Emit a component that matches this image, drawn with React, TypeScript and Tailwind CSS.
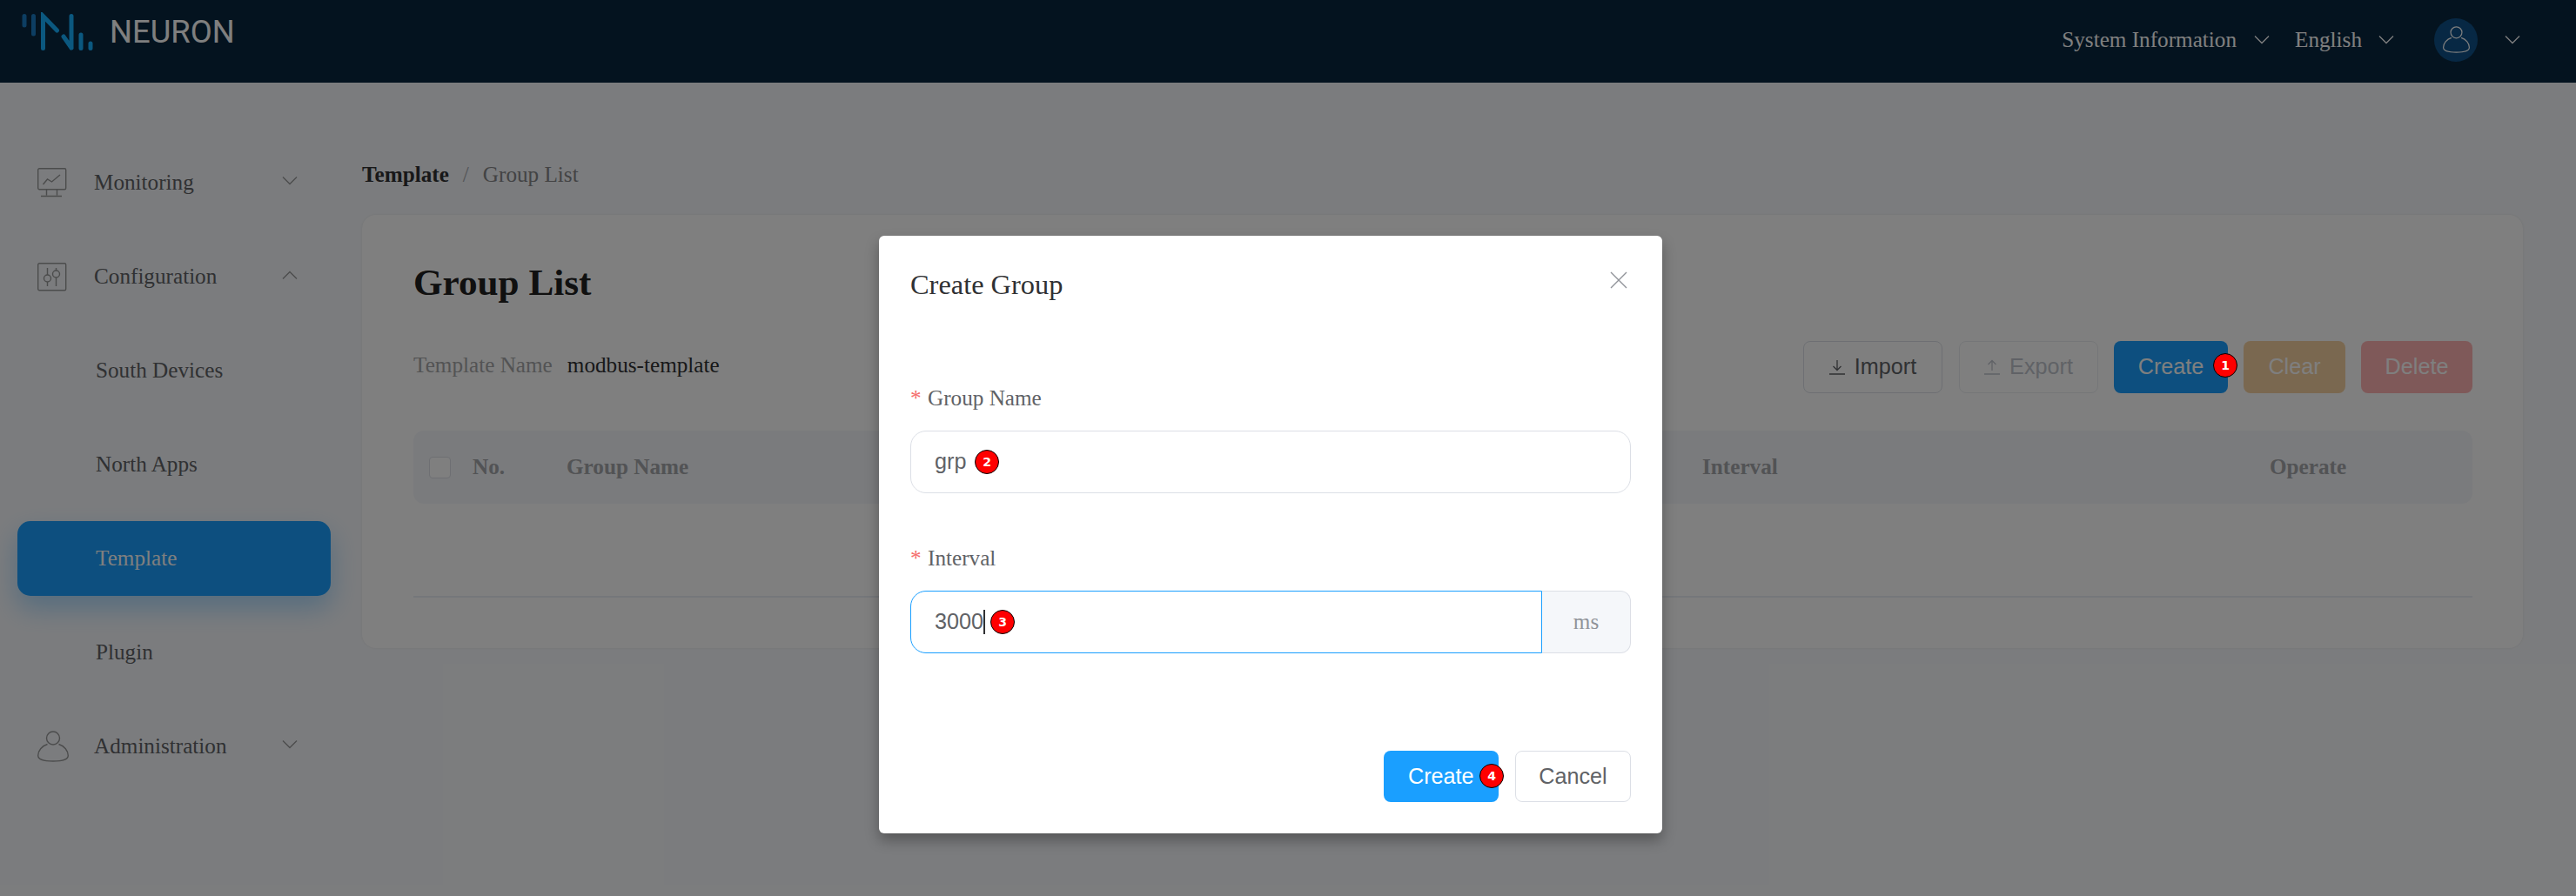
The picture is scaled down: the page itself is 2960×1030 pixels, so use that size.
const serif = "font-['Liberation_Serif',serif]";
const sans = "font-['Liberation_Sans',sans-serif]";

function Chevron({ up = false, className = '' }: { up?: boolean; className?: string }) {
  return (
    <svg width="18" height="10" viewBox="0 0 18 10" fill="none" stroke="currentColor" strokeWidth="1.3" className={className}>
      <path d={up ? 'M1 9.5 L9 1.5 L17 9.5' : 'M1 .5 L9 8.5 L17 .5'} />
    </svg>
  );
}

function UserIcon({ w = 36, h = 36 }: { w?: number; h?: number }) {
  return (
    <svg width={w} height={h} viewBox="0 0 36 36" fill="none" stroke="currentColor" strokeWidth="1.4">
      <circle cx="18" cy="8.5" r="7.5" />
      <path d="M11.5 15.5 C5 17.5 .7 23 .7 28.5 C.7 33 7 35 18 35 C29 35 35.3 33 35.3 28.5 C35.3 23 31 17.5 24.5 15.5" />
    </svg>
  );
}

function MonitorIcon() {
  return (
    <svg width="34" height="34" viewBox="0 0 34 34" fill="none" stroke="currentColor" strokeWidth="1.4">
      <rect x=".7" y=".7" width="32" height="24" rx="1.5" />
      <path d="M6.5 19 L11.5 13 L16.5 16 L26 8" />
      <path d="M10.5 25 V31.5 M22.5 25 V31.5 M4 32.5 H28" />
    </svg>
  );
}

function SlidersIcon() {
  return (
    <svg width="34" height="33" viewBox="0 0 34 33" fill="none" stroke="currentColor" strokeWidth="1.4">
      <rect x=".7" y=".7" width="32" height="31" rx="1.5" />
      <path d="M11.5 6 V14 M11.5 22 V27 M21.5 6 V9 M21.5 17 V27" />
      <circle cx="11.5" cy="18" r="4" />
      <circle cx="21.5" cy="13" r="4" />
    </svg>
  );
}

function Logo() {
  return (
    <svg width="82" height="46" viewBox="0 0 82 46" fill="none" strokeLinecap="round" strokeWidth="5" className="mt-[14px]">
      <path d="M3 4.5 V15 M13.5 4.5 V25" stroke="#1a7cc4" />
      <path d="M24.5 41.5 V4.5 L40.5 21 M48 28 L57 41 M57 41 L57 4.5 M68 26 V41.5 M79 36 V41.5" stroke="#17b0ff" />
    </svg>
  );
}

function Badge({ n, className }: { n: number; className: string }) {
  return (
    <span className={`absolute z-20 flex h-[28px] w-[28px] items-center justify-center rounded-full border border-black bg-[#ff0000] font-['DejaVu_Sans',sans-serif] text-[14px] font-bold leading-none text-white ${className}`}>
      {n}
    </span>
  );
}

function MenuItem({ label, icon, chevron, active, up }: { label: string; icon?: React.ReactNode; chevron?: boolean; active?: boolean; up?: boolean }) {
  return (
    <div
      className={`mb-[22px] flex h-[86px] items-center rounded-[15px] text-[25.2px] ${
        active ? 'bg-[#1a9fff] text-white shadow-[0_14px_30px_rgba(26,159,255,0.35)]' : 'text-[#606266]'
      }`}
    >
      <div className="flex w-[89px] shrink-0 items-center pl-[23px] text-[#979899]">{icon}</div>
      <span className={icon ? '-ml-[1px]' : 'pl-[1px]'}>{label}</span>
      {chevron && <Chevron up={up} className="ml-auto mr-[38px] -translate-y-[2px] text-[#979899]" />}
    </div>
  );
}

function ToolButton({ label, className, children, badge }: { label: string; className: string; children?: React.ReactNode; badge?: React.ReactNode }) {
  return (
    <div className={`relative flex h-[60px] items-center justify-center gap-[11px] rounded-[8px] ${sans} text-[25.2px] ${className}`}>
      {children}
      <span>{label}</span>
      {badge}
    </div>
  );
}

export default function App() {
  return (
    <div className={`relative flex h-[1030px] w-full flex-col overflow-hidden bg-[#f7f9fc] ${serif}`}>
      <header className="flex h-[95px] shrink-0 items-start justify-between bg-[#09273f] pl-[25px] pr-[64px]">
        <div className="flex items-start gap-[19px]">
          <Logo />
          <span className="mt-[15px] font-['Roboto',sans-serif] text-[36.4px] leading-[44px] text-white">NEURON</span>
        </div>
        <div className="flex h-[91px] items-center text-[25.2px] text-white">
          <span>System Information</span>
          <Chevron className="ml-[20px]" />
          <span className="ml-[29px]">English</span>
          <Chevron className="ml-[19px]" />
          <div className="ml-[46px] flex h-[50px] w-[50px] items-center justify-center rounded-full bg-[#0e5188]">
            <UserIcon w={31} h={31} />
          </div>
          <Chevron className="ml-[31px]" />
        </div>
      </header>

      <div className="flex min-h-0 flex-1">
        <aside className="w-[400px] shrink-0 px-[20px] pt-[72px]">
          <MenuItem label="Monitoring" icon={<MonitorIcon />} chevron />
          <MenuItem label="Configuration" icon={<SlidersIcon />} chevron up />
          <MenuItem label="South Devices" />
          <MenuItem label="North Apps" />
          <MenuItem label="Template" active />
          <MenuItem label="Plugin" />
          <MenuItem label="Administration" icon={<UserIcon />} chevron />
        </aside>

        <main className="ml-[16px] w-[2483px] pt-[88px]">
          <div className="flex h-[36px] items-center text-[25.2px]">
            <span className="font-bold text-[#303133]">Template</span>
            <span className="mx-[16px] text-[#a8abb2]">/</span>
            <span className="text-[#868789]">Group List</span>
          </div>

          <section className="mt-[28px] h-[498px] rounded-[16px] bg-white pl-[59px] pr-[58px] pt-[53px] shadow-[0_0_3px_rgba(0,0,0,0.08)]">
            <h1 className="text-[43.2px] font-bold leading-[50px] text-[#202020]">Group List</h1>
            <div className="mt-[42px] flex items-center justify-between">
              <div className="flex items-center pb-[4px] text-[25.2px]">
                <span className="text-[#a6a7a9]">Template Name</span>
                <span className="ml-[17px] text-[#303133]">modbus-template</span>
              </div>
              <div className="flex items-center gap-[18px]">
                <ToolButton label="Import" className="mr-[1px] w-[160px] border border-[#dcdfe6] text-[#606266]">
                  <svg width="18" height="18" viewBox="0 0 18 18" fill="none" stroke="currentColor" strokeWidth="1.3">
                    <path d="M9 1 V12 M4.5 8 L9 12.5 L13.5 8 M0 17 H18" />
                  </svg>
                </ToolButton>
                <ToolButton label="Export" className="w-[160px] border border-[#ebedf0] text-[#c0c4cc]">
                  <svg width="18" height="18" viewBox="0 0 18 18" fill="none" stroke="currentColor" strokeWidth="1.3">
                    <path d="M9 13 V1.5 M4.5 6 L9 1.5 L13.5 6 M0 17 H18" />
                  </svg>
                </ToolButton>
                <ToolButton label="Create" className="w-[131px] bg-[#1a9fff] text-white" badge={<Badge n={1} className="right-[-11px] top-[14px]" />} />
                <ToolButton label="Clear" className="w-[117px] bg-[#f5d0a0] text-white" />
                <ToolButton label="Delete" className="w-[128px] bg-[#ffb3b3] text-white" />
              </div>
            </div>

            <div className="mt-[43px] flex h-[84px] items-center rounded-[12px] bg-[#f5f7fa] text-[25.2px] font-bold text-[#a4a6aa]">
              <span className="ml-[18px] h-[25px] w-[25px] rounded-[4px] border border-[#dcdfe6] bg-white" />
              <span className="ml-[25px] w-[108px]">No.</span>
              <span className="w-[1305px]">Group Name</span>
              <span className="w-[652px]">Interval</span>
              <span>Operate</span>
            </div>
            <div className="h-[108px] border-b-2 border-[#ebeef5]" />
          </section>
        </main>
      </div>

      <div className="absolute inset-0 z-10 bg-black/50" />

      <div className="absolute left-[1010px] top-[271px] z-20 h-[687px] w-[900px] rounded-[6px] bg-white px-[36px] shadow-[0_8px_16px_rgba(0,0,0,0.3)]">
        <div className="flex h-[114px] items-start justify-between pr-[4px] pt-[36px]">
          <span className="text-[32.4px] leading-[40px] text-[#303133]">Create Group</span>
          <svg width="20" height="20" viewBox="0 0 20 20" fill="none" stroke="#909399" strokeWidth="1.4" className="mt-[5px]">
            <path d="M1 1 L19 19 M19 1 L1 19" />
          </svg>
        </div>

        <div className="mt-[54px] flex h-[38px] items-center text-[25.2px] text-[#606266]">
          <span className="w-[20px] text-[#f56c6c]">*</span>
          Group Name
        </div>
        <div className={`relative mt-[18px] flex h-[72px] items-center rounded-[18px] border border-[#dcdfe6] px-[27px] ${sans} text-[25.2px] text-[#606266]`}>
          grp
          <Badge n={2} className="left-[73px] top-[21px]" />
        </div>

        <div className="mt-[56px] flex h-[38px] items-center text-[25.2px] text-[#606266]">
          <span className="w-[20px] text-[#f56c6c]">*</span>
          Interval
        </div>
        <div className="mt-[18px] flex h-[72px]">
          <div className={`relative flex flex-1 items-center rounded-l-[18px] border border-[#1a9fff] px-[27px] ${sans} text-[25.2px] text-[#606266]`}>
            3000
            <span className="h-[28px] w-[1.5px] bg-[#303133]" />
            <Badge n={3} className="left-[91px] top-[21px]" />
          </div>
          <div className="flex w-[102px] items-center justify-center rounded-r-[12px] border border-l-0 border-[#dcdfe6] bg-[#f5f7fa] text-[25.2px] text-[#909399]">
            ms
          </div>
        </div>

        <div className={`mt-[112px] flex justify-end gap-[19px] ${sans} text-[25.2px]`}>
          <div className="relative flex h-[59px] w-[132px] items-center rounded-[8px] bg-[#1a9fff] pl-[28px] text-white">
            Create
            <Badge n={4} className="right-[-6px] top-[15px]" />
          </div>
          <div className="flex h-[59px] w-[133px] items-center justify-center rounded-[8px] border border-[#dcdfe6] text-[#606266]">
            Cancel
          </div>
        </div>
      </div>
    </div>
  );
}
